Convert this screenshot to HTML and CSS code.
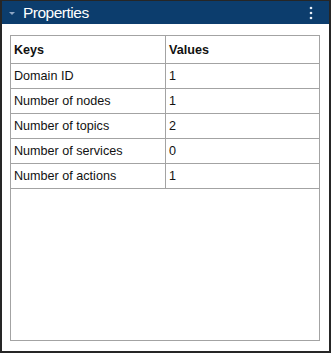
FILE: index.html
```html
<!DOCTYPE html>
<html lang="en">
<head>
  <meta charset="UTF-8" />
  <title>Properties</title>
  <link rel="stylesheet" href="styles.css">
</head>
<body>
  <div class="panel">
    <div class="titlebar">
      <span class="caret"></span>
      <span class="title">Properties</span>
      <span class="menu">
        <svg width="4" height="14" viewBox="0 0 4 14">
          <circle cx="2" cy="2" r="1.3" fill="#e8eef6"/>
          <circle cx="2" cy="7" r="1.3" fill="#e8eef6"/>
          <circle cx="2" cy="12" r="1.3" fill="#e8eef6"/>
        </svg>
      </span>
    </div>

    <div class="content">
      <div class="props">
        <table>
          <tr><th>Keys</th><th>Values</th></tr>
          <tr><td>Domain ID</td><td>1</td></tr>
          <tr><td>Number of nodes</td><td>1</td></tr>
          <tr><td>Number of topics</td><td>2</td></tr>
          <tr><td>Number of services</td><td>0</td></tr>
          <tr><td>Number of actions</td><td>1</td></tr>
        </table>
      </div>
    </div>
  </div>
</body>
</html>
```

FILE: styles.css
```css
html, body { margin: 0; height: 100%; }
body { font-family: "Liberation Sans", Arial, sans-serif; background: #fff; }

.panel {
  height: 100%; box-sizing: border-box;
  border: 2px solid #262626; border-top-width: 1px;
  display: flex; flex-direction: column;
}

.titlebar {
  height: 23px; flex: none;
  background: #0c3d6d;
  display: flex; align-items: center;
  color: #fff;
}
.caret {
  width: 0; height: 0; margin: 1px 8px 0 7px;
  border-left: 3px solid transparent; border-right: 3px solid transparent;
  border-top: 3px solid #8ea6c4;
}
.title { font-size: 15.5px; letter-spacing: -0.5px; flex: 1; }
.menu { margin-right: 16px; display: flex; }

.content { flex: 1; padding: 11px 9px 10px 8px; display: flex; }
.props { flex: 1; border: 1px solid #a3a3a3; }

table { width: 100%; border-collapse: collapse; font-size: 12.6px; color: #111; }
th, td {
  text-align: left; padding: 0 3px;
  border-bottom: 1px solid #a3a3a3;
}
th:first-child, td:first-child { width: 148px; border-right: 1px solid #a3a3a3; }
th { height: 26px; font-weight: bold; padding-top: 1px; }
td { height: 24px; }
```
